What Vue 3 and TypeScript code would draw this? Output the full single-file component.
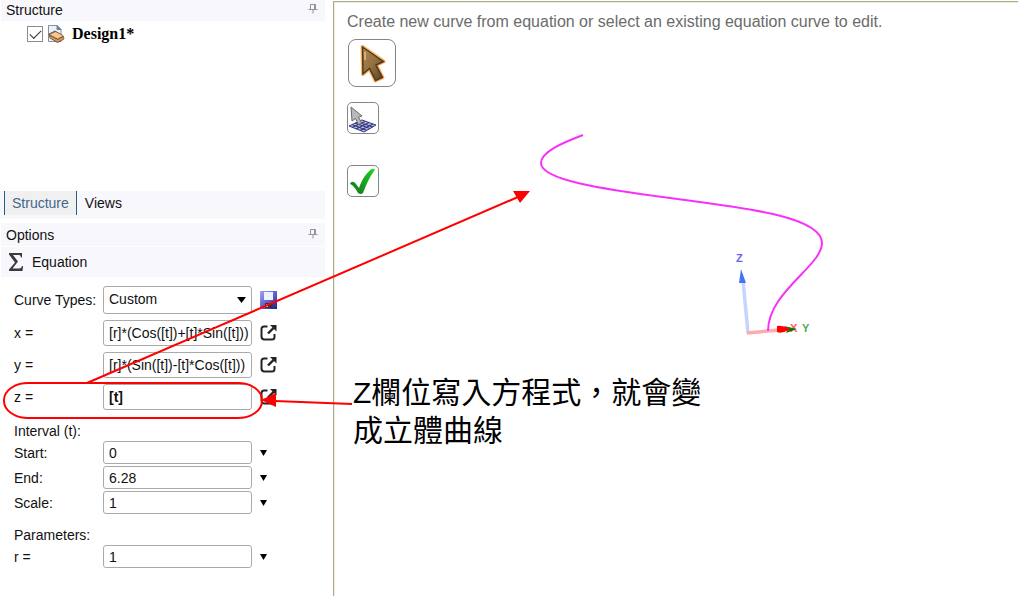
<script setup lang="ts">
import { ref } from 'vue'

interface Field {
  id: string
  label: string
  value: string
  bold?: boolean
}

const designVisible = ref(true)
const activeTab = ref('Structure')
const curveType = ref('Custom')
const equations = ref<Field[]>([
  { id: 'eq-x', label: 'x =', value: '[r]*(Cos([t])+[t]*Sin([t]))' },
  { id: 'eq-y', label: 'y =', value: '[r]*(Sin([t])-[t]*Cos([t]))' },
  { id: 'eq-z', label: 'z =', value: '[t]', bold: true },
])
const interval = ref<Field[]>([
  { id: 'start', label: 'Start:', value: '0' },
  { id: 'end', label: 'End:', value: '6.28' },
  { id: 'scale', label: 'Scale:', value: '1' },
])
const parameters = ref<Field[]>([{ id: 'r', label: 'r =', value: '1' }])
</script>

<template>
  <div class="app">
    <aside class="side">
      <header class="bar bar-top">
        <span>Structure</span>
        <button class="plain" type="button" aria-label="Pin structure">
          <svg width="10" height="11" viewBox="0 0 10 11" fill="none" stroke="#93939b"><path d="M2.5 6V1.5H7.5V6M6.5 1.5V6M0.500 6.500H9.500M5 7V10.500" /></svg>
        </button>
      </header>
      <div class="tree">
        <label class="node">
          <input v-model="designVisible" type="checkbox" />
          <svg width="18" height="18" viewBox="0 0 18 18">
            <path d="M1.500 .5H10L14 4.500V16.500H1.500Z" fill="#e9f1fa" stroke="#8290a6" />
            <path d="M10 .5V4.500H14Z" fill="#6f809b" stroke="#6f809b" />
            <path d="M2 9L8 6L16 10.500L17 14L10.500 17.500L3 13Z" fill="#8f6238" stroke="#65462c" stroke-width=".8" />
            <path d="M3 9.500L8.500 7L16 10.800L10.500 13.500Z" fill="#f4c796" />
            <path d="M3 11L10.500 15L16.500 12.300V14L10.500 16.800L3.500 13Z" fill="#d39a61" />
          </svg>
          <b>Design1*</b>
        </label>
      </div>
      <nav class="tabs">
        <button
          v-for="tab in ['Structure', 'Views']"
          :key="tab"
          type="button"
          :class="{ active: activeTab === tab }"
          @click="activeTab = tab"
        >{{ tab }}</button>
      </nav>
      <header class="bar bar-options">
        <span>Options</span>
        <button class="plain" type="button" aria-label="Pin options">
          <svg width="10" height="11" viewBox="0 0 10 11" fill="none" stroke="#93939b"><path d="M2.500 6V1.500H7.500V6M6.500 1.500V6M0.500 6.500H9.500M5 7V10.500" /></svg>
        </button>
      </header>
      <div class="bar bar-equation">
        <svg width="16" height="20" viewBox="0 0 16 20">
          <path d="M1 1H14V5.500H13C12.600 3.500 12 3 10 3H5L10 9.500L4.500 16.500H11C13 16.500 13.500 15.500 14 14H15L14.500 19H1V17.500L7 10.500L1 2.500Z" fill="#3b3b3f" />
        </svg>
        <span>Equation</span>
      </div>
      <form class="form" @submit.prevent>
        <div class="row">
          <label for="curve-type">Curve Types:</label>
          <div class="select">
            <select id="curve-type" v-model="curveType"><option>Custom</option></select>
            <svg width="9" height="6" viewBox="0 0 9 6"><path d="M0 0H9L4.500 6Z" /></svg>
          </div>
          <button class="plain" type="button" aria-label="Save curve">
            <svg width="17" height="18" viewBox="0 0 17 18">
              <defs>
                <linearGradient id="disk" x1="0" y1="0" x2="1" y2="1"><stop offset="0" stop-color="#a4a4ee" /><stop offset=".6" stop-color="#5656c4" /><stop offset="1" stop-color="#20208c" /></linearGradient>
              </defs>
              <path d="M0 0H17V18H2L0 16Z" fill="url(#disk)" />
              <path d="M4 1H13V9H4Z" fill="#eef0fb" />
              <path d="M5 12H13V17H5Z" fill="#34343f" />
              <path d="M6 13H8V16H6Z" fill="#d6d9ea" />
            </svg>
          </button>
        </div>
        <div v-for="f in equations" :key="f.id" class="row">
          <label :for="f.id">{{ f.label }}</label>
          <input :id="f.id" v-model="f.value" type="text" :class="{ bold: f.bold }" />
          <button class="plain" type="button" :aria-label="'Expand ' + f.label">
            <svg width="18" height="18" viewBox="0 0 18 18" fill="none" stroke="#242428">
              <path d="M7.500 2.500H4Q1.500 2.500 1.500 5V12.500Q1.500 15.500 4.500 15.500H12Q14.500 15.500 14.500 13V10" stroke-width="2" />
              <path d="M8 9.500L14 3.500" stroke-width="2.400" />
              <path d="M10 1H16.500V7.500Z" fill="#242428" stroke="none" />
            </svg>
          </button>
        </div>
        <h2>Interval (t):</h2>
        <div v-for="f in interval" :key="f.id" class="row short">
          <label :for="f.id">{{ f.label }}</label>
          <input :id="f.id" v-model="f.value" type="text" />
          <button class="plain" type="button" :aria-label="'Options for ' + f.label">
            <svg width="7" height="6" viewBox="0 0 7 6"><path d="M0 0H7L3.500 6Z" /></svg>
          </button>
        </div>
        <h2>Parameters:</h2>
        <div v-for="f in parameters" :key="f.id" class="row short">
          <label :for="f.id">{{ f.label }}</label>
          <input :id="f.id" v-model="f.value" type="text" />
          <button class="plain" type="button" :aria-label="'Options for ' + f.label">
            <svg width="7" height="6" viewBox="0 0 7 6"><path d="M0 0H7L3.500 6Z" /></svg>
          </button>
        </div>
      </form>
    </aside>

    <main class="view">
      <svg class="scene" width="684" height="594" viewBox="334 2 684 594">
        <path d="M748 333L743 280" stroke="#c6d5ff" stroke-width="3.500" />
        <path d="M747 333L779 330" stroke="#ffabab" stroke-width="3.500" />
        <path d="M741 269L746 283H739Z" fill="#4674f5" />
        <path d="M583 135C562 143 541 152 541 163C541 180 602 189 670 198C735 207 822 215 822 243C822 266 768 292 768 331" fill="none" stroke="#f731f7" stroke-width="2" />
        <text x="790" y="332" fill="#ff5c5c">X</text>
        <path d="M784 326L797 329L786 333L788 329Z" fill="#077a07" />
        <path d="M777 326Q780 325 789 328V330Q781 334 777 332Z" fill="#f00" />
        <text x="802" y="332" fill="#58a858">Y</text>
        <text x="736" y="262" fill="#6464f5">Z</text>
      </svg>
      <p class="hint">Create new curve from equation or select an existing equation curve to edit.</p>
      <div class="tools">
        <button class="tool large" type="button" aria-label="Select curve">
          <svg width="46" height="46" viewBox="0 0 46 46">
            <defs><linearGradient id="arrow" x1="0" y1="0" x2="1" y2="1"><stop offset="0" stop-color="#b08951" /><stop offset=".5" stop-color="#94703e" /><stop offset="1" stop-color="#59401f" /></linearGradient></defs>
            <path d="M13.500 7L34.500 21.500L27 25L33.500 37.500L26.500 40.500L20.500 28.500L14 34Z" fill="none" stroke="#ffb668" stroke-width="4" stroke-linejoin="round" />
            <path d="M13.500 7L34.500 21.500L27 25L33.500 37.500L26.500 40.500L20.500 28.500L14 34Z" fill="url(#arrow)" stroke="#4d391f" stroke-width="1.500" />
            <path d="M16 12V20" stroke="#d7b078" stroke-width="2" />
          </svg>
        </button>
        <button class="tool" type="button" aria-label="Select plane">
          <svg width="30" height="30" viewBox="0 0 30 30">
            <path d="M1 23L14 17L28 22L16 29Z" fill="#b9bee0" stroke="#343a83" />
            <path d="M4 21.500L19 27.500M7 20L22 25.500M10 19L25 24M4 24.500L17 18.500M8 26L21 19.500M12 27.500L25 21" stroke="#343a83" stroke-width="1.200" />
            <path d="M3 4L14 13L10.500 14L13.500 20L10.500 21.500L7.500 15.500L4 18Z" fill="#b9b9b9" stroke="#6a6a6a" />
          </svg>
        </button>
        <button class="tool" type="button" aria-label="Complete">
          <svg width="30" height="30" viewBox="0 0 30 30">
            <defs><linearGradient id="check" x1="0" y1="1" x2="1" y2="0"><stop offset="0" stop-color="#146f20" /><stop offset="1" stop-color="#19d61d" /></linearGradient></defs>
            <path d="M2 18C3 15 6 15 8 18L11 22C14 13 19 6 24 3Q28 2 26 5C21 12 18 19 15 27Q13 29 10 27C8 23 5 19 2 18Z" fill="url(#check)" />
          </svg>
        </button>
      </div>
      <p class="note" lang="zh-Hant">Z欄位寫入方程式，就會變<br />成立體曲線</p>
    </main>

    <svg class="marks" width="540" height="430" viewBox="0 0 540 430">
      <g fill="none" stroke="#f00" stroke-width="2">
        <rect x="4" y="383" width="258" height="35" rx="24" ry="17" />
        <path d="M87 383L518 197M352 404L275 401" />
      </g>
      <path d="M513 191H530L520 203ZM261 400L276 393V407Z" fill="#f00" />
    </svg>
  </div>
</template>

<style>
body {
  margin: 0;
  background: #fff;
}
</style>

<style scoped>
* {
  box-sizing: border-box;
}
.app {
  position: relative;
  display: flex;
  gap: 8px;
  min-height: 100vh;
  font: 14px/18px "Liberation Sans", Arial, sans-serif;
  color: #111;
}
button,
input,
select {
  font: inherit;
  color: inherit;
  margin: 0;
}
svg {
  display: block;
}
.plain {
  padding: 0;
  border: 0;
  background: none;
}
.side {
  flex: 0 0 325px;
}
.bar {
  display: flex;
  align-items: center;
  margin-left: 1px;
  padding: 0 7px 0 5px;
  background: #f7f7fc;
}
.bar-top,
.bar-options {
  justify-content: space-between;
}
.bar-top {
  height: 21px;
  padding-bottom: 1px;
}
.bar-options {
  height: 23px;
  margin-top: 4px;
}
.bar-equation {
  height: 30px;
  margin-top: 1px;
  padding-left: 7px;
  gap: 8px;
}
.bar .plain {
  padding-bottom: 3px;
}
.tree {
  min-height: 170px;
  padding: 3px 0 0 27px;
}
.node {
  display: flex;
  align-items: center;
  gap: 4px;
  width: fit-content;
  height: 20px;
}
.node b {
  margin-left: 3px;
  font: bold 16px/20px "Liberation Serif", "Times New Roman", serif;
  color: #000;
}
.node input {
  appearance: none;
  display: grid;
  place-items: center;
  width: 16px;
  height: 16px;
  border: 1px solid #8c8c8c;
  background: #fff;
}
.node input:checked::before {
  content: "";
  width: 10px;
  height: 5px;
  margin-bottom: 3px;
  border: solid #333;
  border-width: 0 0 1px 1px;
  transform: rotate(-45deg);
}
.tabs {
  display: flex;
  height: 28px;
  padding: 0 0 4px 4px;
  background: #f7f7fc;
}
.tabs button {
  padding: 0 8px;
  border: 0;
  background: none;
}
.tabs .active {
  padding: 0 7px;
  border: solid #24608f;
  border-width: 0 1px;
  background: #f0f0f0;
  color: #40688c;
}
.form {
  padding: 9px 0 0 14px;
}
.row {
  display: grid;
  grid-template-columns: 81px 149px auto;
  column-gap: 8px;
  justify-content: start;
  align-items: center;
  margin-bottom: 6px;
}
.row label {
  white-space: nowrap;
}
.row input,
.row select {
  width: 100%;
  height: 26px;
  padding: 0 0 0 5px;
  border: 1px solid #aaa;
  border-radius: 3px;
  outline: 0;
  background: #fff;
}
.row select {
  height: 28px;
  padding-bottom: 2px;
  appearance: none;
}
.select {
  position: relative;
}
.select svg {
  position: absolute;
  right: 6px;
  top: 11px;
  pointer-events: none;
}
.row .bold {
  font-weight: bold;
}
.row.short {
  margin-bottom: 2px;
}
.short input {
  height: 23px;
}
.form h2 {
  margin: 12px 0 1px;
  font: inherit;
}
.view {
  position: relative;
  flex: 1;
  min-width: 0;
  margin-top: 1px;
  padding: 10px 0 0 13px;
  border: solid #aaa78a;
  border-width: 1px 0 0 1px;
  box-shadow: inset 1px 1px #f0eddc;
}
.scene {
  position: absolute;
  left: 0;
  top: 0;
  font: bold 11px "Liberation Sans", Arial, sans-serif;
}
.hint {
  position: relative;
  margin: 0 0 7px;
  font-size: 16px;
  line-height: 20px;
  color: #6b6b6b;
}
.tools {
  position: relative;
  display: flex;
  flex-direction: column;
  align-items: flex-start;
}
.tool {
  display: grid;
  place-items: center;
  width: 32px;
  height: 32px;
  margin-bottom: 31px;
  padding: 0;
  border: 1px solid #858585;
  border-radius: 5px;
  background: #fff;
}
.tool.large {
  width: 48px;
  height: 48px;
  margin: 0 0 15px 1px;
  border-radius: 8px;
}
.note {
  position: absolute;
  left: 19px;
  top: 372px;
  margin: 0;
  font: 30px/38px "Liberation Sans", "Noto Sans CJK TC", sans-serif;
  color: #000;
  white-space: nowrap;
}
.marks {
  position: absolute;
  left: 0;
  top: 0;
  pointer-events: none;
}
</style>
